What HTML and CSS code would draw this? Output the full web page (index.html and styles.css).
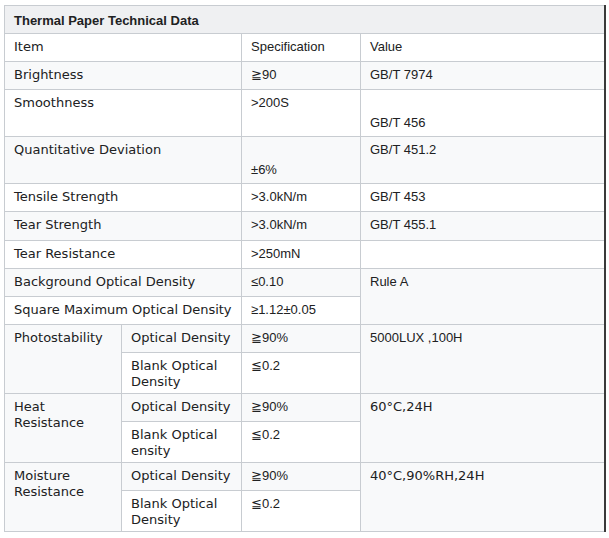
FILE: index.html
```html
<!DOCTYPE html>
<html>
<head>
<meta charset="utf-8">
<title>Thermal Paper Technical Data</title>
<link rel="stylesheet" href="styles.css">
</head>
<body>
<div class="wrap">
<table class="data">
  <colgroup>
    <col class="c1"><col class="c2"><col class="c3"><col class="c4">
  </colgroup>
  <tr class="title h28"><td colspan="4" class="a b">Thermal Paper Technical Data</td></tr>
  <tr class="h28"><td colspan="2" class="v">Item</td><td class="a">Specification</td><td class="a">Value</td></tr>
  <tr class="h28"><td colspan="2" class="v">Brightness</td><td class="a">≧90</td><td class="a">GB/T 7974</td></tr>
  <tr class="h47"><td colspan="2" class="v">Smoothness</td><td class="a">&gt;200S</td><td class="a low">GB/T 456</td></tr>
  <tr class="h47"><td colspan="2" class="v">Quantitative Deviation</td><td class="a low">±6%</td><td class="a">GB/T 451.2</td></tr>
  <tr class="h28"><td colspan="2" class="v">Tensile Strength</td><td class="a">&gt;3.0kN/m</td><td class="a">GB/T 453</td></tr>
  <tr class="h29"><td colspan="2" class="v">Tear Strength</td><td class="a">&gt;3.0kN/m</td><td class="a">GB/T 455.1</td></tr>
  <tr class="h28"><td colspan="2" class="v">Tear Resistance</td><td class="a">&gt;250mN</td><td class="a"></td></tr>
  <tr class="h28"><td colspan="2" class="v">Background Optical Density</td><td class="a">≤0.10</td><td class="a" rowspan="2">Rule A</td></tr>
  <tr class="h28"><td colspan="2" class="v">Square Maximum Optical Density</td><td class="a">≥1.12±0.05</td></tr>
  <tr class="h28"><td class="v" rowspan="2">Photostability</td><td class="v">Optical Density</td><td class="a">≧90%</td><td class="a" rowspan="2">5000LUX ,100H</td></tr>
  <tr class="h41"><td class="v">Blank Optical Density</td><td class="a">≦0.2</td></tr>
  <tr class="h28"><td class="v" rowspan="2">Heat Resistance</td><td class="v">Optical Density</td><td class="a">≧90%</td><td class="v" rowspan="2">60°C,24H</td></tr>
  <tr class="h41"><td class="v">Blank Optical ensity</td><td class="a">≦0.2</td></tr>
  <tr class="h28"><td class="v" rowspan="2">Moisture Resistance</td><td class="v">Optical Density</td><td class="a">≧90%</td><td class="v" rowspan="2">40°C,90%RH,24H</td></tr>
  <tr class="h41"><td class="v">Blank Optical Density</td><td class="a">≦0.2</td></tr>
</table>
</div>
</body>
</html>
```

FILE: styles.css
```css
html, body {
  margin: 0;
  padding: 0;
  background: #ffffff;
}
.wrap {
  padding: 5px 0 0 4px;
}
.data {
  border-collapse: collapse;
  table-layout: fixed;
  width: 601px;
  color: #202122;
  font-size: 13px;
  line-height: 16px;
  border-right: 2px solid #3a3a3a;
}
.c1 { width: 117px; }
.c2 { width: 120px; }
.c3 { width: 119px; }
.c4 { width: 244px; }
.data td {
  border: 1px solid #c8ccd1;
  padding: 5px 8px 0 9px;
  vertical-align: top;
  overflow: hidden;
}
.data tr:nth-child(odd) td { background: #f8f9fa; }
.data tr.title td {
  background: #eff0f2;
  padding-top: 7px;
}
.h28 { height: 28px; }
.h29 { height: 29px; }
.h41 { height: 41px; }
.h47 { height: 47px; }
.v { font-family: "DejaVu Sans", Verdana, sans-serif; }
.a { font-family: "Liberation Sans", Arial, sans-serif; }
.b { font-weight: bold; }
.data td.low { padding-top: 25px; }
```
